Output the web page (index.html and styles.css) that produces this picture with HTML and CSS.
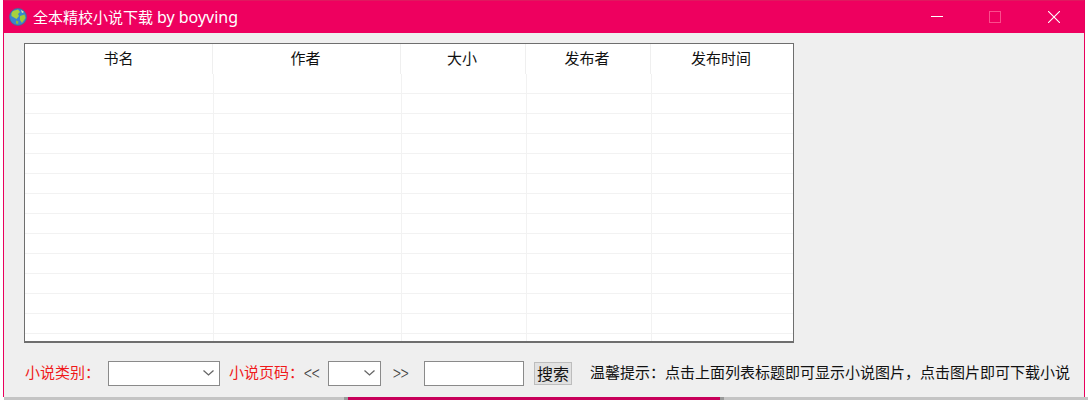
FILE: index.html
```html
<!DOCTYPE html>
<html lang="zh-CN">
<head>
    <meta charset="UTF-8">
    <title>全本精校小说下载 by boyving</title>
    <link rel="stylesheet" href="styles.css">
</head>
<body>
    <div class="window">
        <div class="titlebar">
            <svg class="globe" width="18" height="18" viewBox="0 0 18 18">
                <circle cx="9" cy="9" r="8.5" fill="#3a86cf" stroke="#4a6a8a" stroke-width="0.8"/>
                <path d="M4 3 L9 1.5 L11 4 L9 6 L10 8 L7.5 11 L5 9.5 L2.5 8 L2.5 5 Z" fill="#a8d23e"/>
                <path d="M11 8 L15.5 6.5 L16.5 10 L13 15 L11 12 Z" fill="#9fcb38"/>
                <path d="M7 12.5 L9.5 13.5 L9 16 L7 15.5 Z" fill="#8dbb3a"/>
                <path d="M12 2 L15 4 L13 5 Z" fill="#e4efb0"/>
            </svg>
            <span class="title">全本精校小说下载 <span class="title-en">by boyving</span></span>
            <div class="controls">
                <svg width="12" height="2" viewBox="0 0 12 2"><rect width="12" height="1" fill="#fff"/></svg>
                <svg width="12" height="12" viewBox="0 0 12 12"><rect x="0.5" y="0.5" width="11" height="11" fill="none" stroke="#fb4d8c"/></svg>
                <svg class="close" width="12" height="12" viewBox="0 0 12 12"><path d="M0 0 L12 12 M12 0 L0 12" stroke="#fff" stroke-width="1.1"/></svg>
            </div>
        </div>
        <div class="content">
            <div class="list">
                <div class="list-head">
                    <div class="col col-name">书名</div>
                    <div class="col col-author">作者</div>
                    <div class="col col-size">大小</div>
                    <div class="col col-pub">发布者</div>
                    <div class="col col-time">发布时间</div>
                </div>
                <div class="list-body"></div>
            </div>
            <div class="toolbar">
                <span class="label label-type">小说类别&#xFF1A;</span>
                <div class="combo combo-type"><svg width="11" height="6" viewBox="0 0 11 6"><path d="M0.5 0.5 L5.5 5 L10.5 0.5" fill="none" stroke="#666" stroke-width="1.3"/></svg></div>
                <span class="label label-page">小说页码&#xFF1A;</span>
                <span class="arrows prev">&lt;&lt;</span>
                <div class="combo combo-page"><svg width="11" height="6" viewBox="0 0 11 6"><path d="M0.5 0.5 L5.5 5 L10.5 0.5" fill="none" stroke="#666" stroke-width="1.3"/></svg></div>
                <span class="arrows next">&gt;&gt;</span>
                <input class="search-box" type="text">
                <button class="search-btn">搜索</button>
                <span class="tip">温馨提示&#xFF1A;点击上面列表标题即可显示小说图片&#xFF0C;点击图片即可下载小说</span>
            </div>
        </div>
    </div>
    <div class="below"><div class="below-pink"></div></div>
</body>
</html>
```

FILE: styles.css
```css
html, body {
    margin: 0;
    height: 400px;
    overflow: hidden;
    background: #fff;
}
body {
    font-family: "Noto Sans CJK SC", "Liberation Sans", sans-serif;
    font-size: 15px;
    color: #111;
}
.window {
    margin: 0 3px;
    height: 397px;
    box-sizing: border-box;
    background: #efefef;
    border-left: 1px solid #e9005c;
    border-right: 1px solid #e9005c;
    display: flex;
    flex-direction: column;
}
.titlebar {
    height: 33px;
    flex: none;
    box-sizing: border-box;
    background: #ee005f;
    border-top: 1px solid #e0185f;
    color: #fff;
    display: flex;
    align-items: center;
    padding-left: 5px;
}
.globe {
    margin-right: 6px;
}
.title {
    font-family: "Noto Sans", "Noto Sans CJK SC", sans-serif;
    font-size: 15px;
}
.title-en {
    font-size: 16px;
}
.controls {
    margin-left: auto;
    display: flex;
    align-items: center;
    gap: 46px;
    padding-right: 24px;
}
.close {
    margin-left: 1px;
}
.content {
    flex: 1;
    padding: 10px 0 0 20px;
}
.list {
    width: 770px;
    height: 300px;
    box-sizing: border-box;
    border: 1px solid #6e6e6e;
    border-bottom-width: 2px;
    background: #fff;
    overflow: hidden;
}
.list-head {
    display: flex;
    height: 30px;
}
.col {
    box-sizing: border-box;
    height: 30px;
    line-height: 28px;
    padding-right: 2px;
    text-align: center;
    border-right: 1px solid #efefef;
}
.col-name { width: 188px; padding-right: 0; }
.col-author { width: 188px; }
.col-size { width: 125px; }
.col-pub { width: 125px; }
.col-time { flex: 1; border-right: 0; }
.list-body {
    height: 270px;
    background-color: #fff;
    background-image:
        linear-gradient(to right, transparent 188px, #f2f2f2 188px, #f2f2f2 189px, transparent 189px, transparent 376px, #f2f2f2 376px, #f2f2f2 377px, transparent 377px, transparent 501px, #f2f2f2 501px, #f2f2f2 502px, transparent 502px, transparent 626px, #f2f2f2 626px, #f2f2f2 627px, transparent 627px),
        repeating-linear-gradient(to bottom, transparent 0, transparent 19px, #f2f2f2 19px, #f2f2f2 20px);
}
.toolbar {
    display: flex;
    align-items: center;
    height: 26px;
    margin-top: 17px;
    padding-left: 1px;
    white-space: nowrap;
}
.toolbar > * {
    flex: none;
}
.label {
    color: #f01a1a;
    padding-bottom: 3px;
}
.label-type { width: 83px; }
.label-page { width: 75px; margin-left: 9px; }
.combo {
    box-sizing: border-box;
    height: 25px;
    background: #fff;
    border: 1px solid #8a8a8a;
    display: flex;
    align-items: center;
    justify-content: flex-end;
    padding-right: 5px;
}
.combo-type { width: 112px; }
.combo-page { width: 53px; margin-left: 10px; }
.arrows {
    color: #444;
    font-size: 21px;
    font-weight: 300;
    width: 15px;
    padding-bottom: 3px;
    transform: scaleX(0.7);
    transform-origin: left center;
}
.prev { width: 14px; }
.next { margin-left: 12px; }
.search-box {
    box-sizing: border-box;
    width: 100px;
    height: 25px;
    margin: 0 0 0 16px;
    border: 1px solid #8a8a8a;
    background: #fff;
    padding: 0;
    outline: 0;
}
.search-btn {
    box-sizing: border-box;
    width: 38px;
    height: 23px;
    margin: 1px 0 0 10px;
    padding: 0;
    border: 1px solid #bdbdbd;
    background: #e1e1e1;
    font-family: "Noto Sans CJK SC", sans-serif;
    font-size: 16px;
    color: #111;
    line-height: 21px;
}
.tip {
    margin-left: 18px;
    padding-bottom: 3px;
}
.below {
    height: 3px;
    margin-left: 4px;
    background: #c4c4c4;
    padding-left: 340px;
}
.below-pink {
    box-sizing: border-box;
    width: 380px;
    height: 3px;
    background: #c8005a;
    border-left: 4px solid #999;
    border-right: 4px solid #999;
}
```
